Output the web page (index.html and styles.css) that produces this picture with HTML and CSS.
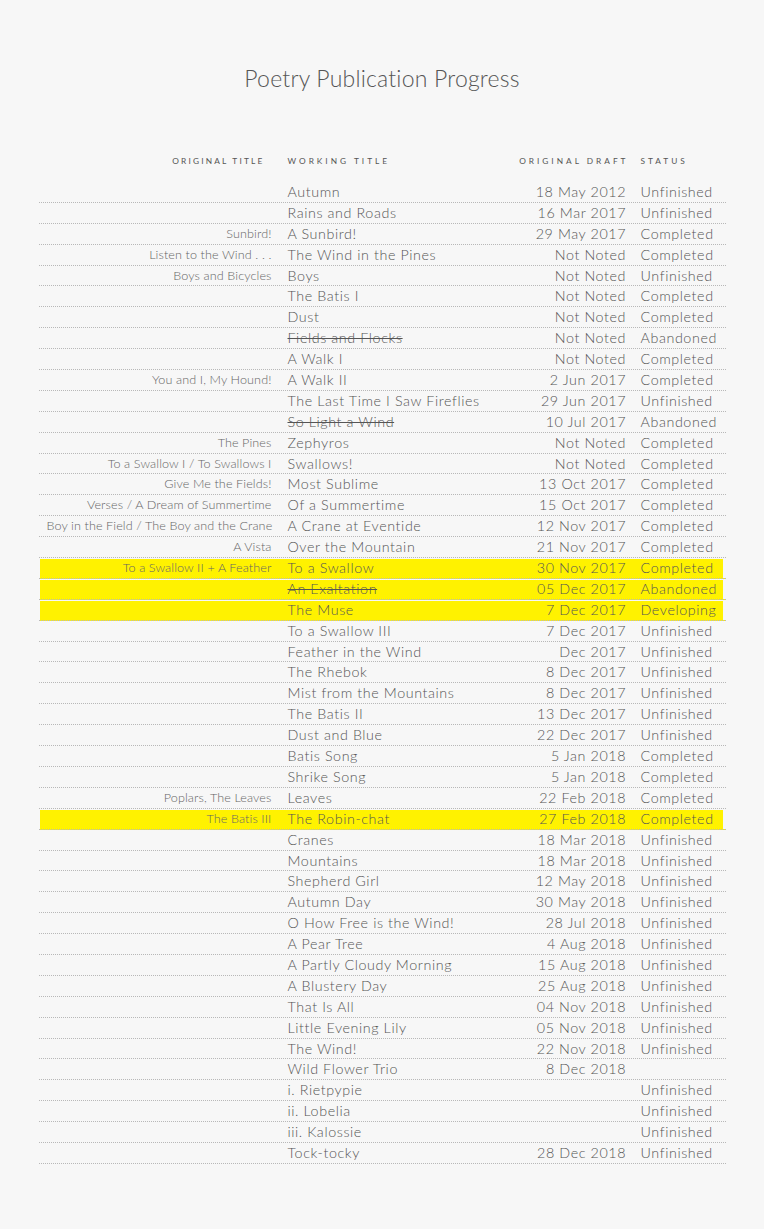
FILE: index.html
```html
<!DOCTYPE html>
<html>
<head>
<meta charset="utf-8">
<title>Poetry Publication Progress</title>
<link rel="stylesheet" href="styles.css">
</head>
<body>
<div class="page">
  <h1 class="title">Poetry Publication Progress</h1>
  <div class="table">
    <div class="row head">
      <div class="c1">Original Title</div>
      <div class="c2">Working Title</div>
      <div class="c3">Original Draft</div>
      <div class="c4">Status</div>
    </div>
    <div class="row"><div class="c1"></div><div class="c2">Autumn</div><div class="c3">18 May 2012</div><div class="c4">Unfinished</div></div>
    <div class="row"><div class="c1"></div><div class="c2">Rains and Roads</div><div class="c3">16 Mar 2017</div><div class="c4">Unfinished</div></div>
    <div class="row"><div class="c1">Sunbird!</div><div class="c2">A Sunbird!</div><div class="c3">29 May 2017</div><div class="c4">Completed</div></div>
    <div class="row"><div class="c1">Listen to the Wind . . .</div><div class="c2">The Wind in the Pines</div><div class="c3">Not Noted</div><div class="c4">Completed</div></div>
    <div class="row"><div class="c1">Boys and Bicycles</div><div class="c2">Boys</div><div class="c3">Not Noted</div><div class="c4">Unfinished</div></div>
    <div class="row"><div class="c1"></div><div class="c2">The Batis I</div><div class="c3">Not Noted</div><div class="c4">Completed</div></div>
    <div class="row"><div class="c1"></div><div class="c2">Dust</div><div class="c3">Not Noted</div><div class="c4">Completed</div></div>
    <div class="row"><div class="c1"></div><div class="c2"><s>Fields and Flocks</s></div><div class="c3">Not Noted</div><div class="c4">Abandoned</div></div>
    <div class="row"><div class="c1"></div><div class="c2">A Walk I</div><div class="c3">Not Noted</div><div class="c4">Completed</div></div>
    <div class="row"><div class="c1">You and I, My Hound!</div><div class="c2">A Walk II</div><div class="c3">2 Jun 2017</div><div class="c4">Completed</div></div>
    <div class="row"><div class="c1"></div><div class="c2">The Last Time I Saw Fireflies</div><div class="c3">29 Jun 2017</div><div class="c4">Unfinished</div></div>
    <div class="row"><div class="c1"></div><div class="c2"><s>So Light a Wind</s></div><div class="c3">10 Jul 2017</div><div class="c4">Abandoned</div></div>
    <div class="row"><div class="c1">The Pines</div><div class="c2">Zephyros</div><div class="c3">Not Noted</div><div class="c4">Completed</div></div>
    <div class="row"><div class="c1">To a Swallow I / To Swallows I</div><div class="c2">Swallows!</div><div class="c3">Not Noted</div><div class="c4">Completed</div></div>
    <div class="row"><div class="c1">Give Me the Fields!</div><div class="c2">Most Sublime</div><div class="c3">13 Oct 2017</div><div class="c4">Completed</div></div>
    <div class="row"><div class="c1">Verses / A Dream of Summertime</div><div class="c2">Of a Summertime</div><div class="c3">15 Oct 2017</div><div class="c4">Completed</div></div>
    <div class="row"><div class="c1">Boy in the Field / The Boy and the Crane</div><div class="c2">A Crane at Eventide</div><div class="c3">12 Nov 2017</div><div class="c4">Completed</div></div>
    <div class="row"><div class="c1">A Vista</div><div class="c2">Over the Mountain</div><div class="c3">21 Nov 2017</div><div class="c4">Completed</div></div>
    <div class="row hl"><div class="c1">To a Swallow II + A Feather</div><div class="c2">To a Swallow</div><div class="c3">30 Nov 2017</div><div class="c4">Completed</div></div>
    <div class="row hl"><div class="c1"></div><div class="c2"><s>An Exaltation</s></div><div class="c3">05 Dec 2017</div><div class="c4">Abandoned</div></div>
    <div class="row hl"><div class="c1"></div><div class="c2">The Muse</div><div class="c3">7 Dec 2017</div><div class="c4">Developing</div></div>
    <div class="row"><div class="c1"></div><div class="c2">To a Swallow III</div><div class="c3">7 Dec 2017</div><div class="c4">Unfinished</div></div>
    <div class="row"><div class="c1"></div><div class="c2">Feather in the Wind</div><div class="c3">Dec 2017</div><div class="c4">Unfinished</div></div>
    <div class="row"><div class="c1"></div><div class="c2">The Rhebok</div><div class="c3">8 Dec 2017</div><div class="c4">Unfinished</div></div>
    <div class="row"><div class="c1"></div><div class="c2">Mist from the Mountains</div><div class="c3">8 Dec 2017</div><div class="c4">Unfinished</div></div>
    <div class="row"><div class="c1"></div><div class="c2">The Batis II</div><div class="c3">13 Dec 2017</div><div class="c4">Unfinished</div></div>
    <div class="row"><div class="c1"></div><div class="c2">Dust and Blue</div><div class="c3">22 Dec 2017</div><div class="c4">Unfinished</div></div>
    <div class="row"><div class="c1"></div><div class="c2">Batis Song</div><div class="c3">5 Jan 2018</div><div class="c4">Completed</div></div>
    <div class="row"><div class="c1"></div><div class="c2">Shrike Song</div><div class="c3">5 Jan 2018</div><div class="c4">Completed</div></div>
    <div class="row"><div class="c1">Poplars, The Leaves</div><div class="c2">Leaves</div><div class="c3">22 Feb 2018</div><div class="c4">Completed</div></div>
    <div class="row hl"><div class="c1">The Batis III</div><div class="c2">The Robin-chat</div><div class="c3">27 Feb 2018</div><div class="c4">Completed</div></div>
    <div class="row"><div class="c1"></div><div class="c2">Cranes</div><div class="c3">18 Mar 2018</div><div class="c4">Unfinished</div></div>
    <div class="row"><div class="c1"></div><div class="c2">Mountains</div><div class="c3">18 Mar 2018</div><div class="c4">Unfinished</div></div>
    <div class="row"><div class="c1"></div><div class="c2">Shepherd Girl</div><div class="c3">12 May 2018</div><div class="c4">Unfinished</div></div>
    <div class="row"><div class="c1"></div><div class="c2">Autumn Day</div><div class="c3">30 May 2018</div><div class="c4">Unfinished</div></div>
    <div class="row"><div class="c1"></div><div class="c2">O How Free is the Wind!</div><div class="c3">28 Jul 2018</div><div class="c4">Unfinished</div></div>
    <div class="row"><div class="c1"></div><div class="c2">A Pear Tree</div><div class="c3">4 Aug 2018</div><div class="c4">Unfinished</div></div>
    <div class="row"><div class="c1"></div><div class="c2">A Partly Cloudy Morning</div><div class="c3">15 Aug 2018</div><div class="c4">Unfinished</div></div>
    <div class="row"><div class="c1"></div><div class="c2">A Blustery Day</div><div class="c3">25 Aug 2018</div><div class="c4">Unfinished</div></div>
    <div class="row"><div class="c1"></div><div class="c2">That Is All</div><div class="c3">04 Nov 2018</div><div class="c4">Unfinished</div></div>
    <div class="row"><div class="c1"></div><div class="c2">Little Evening Lily</div><div class="c3">05 Nov 2018</div><div class="c4">Unfinished</div></div>
    <div class="row"><div class="c1"></div><div class="c2">The Wind!</div><div class="c3">22 Nov 2018</div><div class="c4">Unfinished</div></div>
    <div class="row"><div class="c1"></div><div class="c2">Wild Flower Trio</div><div class="c3">8 Dec 2018</div><div class="c4"></div></div>
    <div class="row"><div class="c1"></div><div class="c2">i. Rietpypie</div><div class="c3"></div><div class="c4">Unfinished</div></div>
    <div class="row"><div class="c1"></div><div class="c2">ii. Lobelia</div><div class="c3"></div><div class="c4">Unfinished</div></div>
    <div class="row"><div class="c1"></div><div class="c2">iii. Kalossie</div><div class="c3"></div><div class="c4">Unfinished</div></div>
    <div class="row"><div class="c1"></div><div class="c2">Tock-tocky</div><div class="c3">28 Dec 2018</div><div class="c4">Unfinished</div></div>
  </div>
</div>
</body>
</html>
```

FILE: styles.css
```css
html, body {
  margin: 0;
  padding: 0;
  background: #f7f7f7;
}

body {
  font-family: Lato, "Open Sans", sans-serif;
  font-weight: 300;
  color: #555;
}

.page {
  padding-top: 63px;
}

.title {
  margin: 0 0 57px;
  text-align: center;
  font-size: 23px;
  font-weight: 300;
  line-height: 30px;
  color: #555;
  letter-spacing: 0.2px;
}

.table {
  width: 687px;
  margin: 0 auto;
}

.row {
  display: grid;
  grid-template-columns: 241px 230px 124px 92px;
  height: 20.9px;
  align-items: center;
  border-bottom: 1px dotted #b8b8b8;
  box-sizing: border-box;
  font-size: 14.3px;
  letter-spacing: 0.6px;
  line-height: 20px;
  white-space: nowrap;
}

.row > div {
  padding: 0 8px;
}

.c1 {
  text-align: right;
  font-size: 12.6px;
  letter-spacing: 0.1px;
  color: #666;
}

.c2 {
  text-align: left;
}

.c3 {
  text-align: right;
  margin-right: -0.6px;
}

.c4 {
  text-align: left;
  padding-left: 7px !important;
}

.row.head {
  border-bottom: none;
  height: 22px;
  margin-bottom: 10px;
  font-size: 8.3px;
  font-weight: 400;
  letter-spacing: 3px;
  text-transform: uppercase;
  color: #555;
}

.row.head .c1 {
  font-size: 8.3px;
  letter-spacing: 2.2px;
  padding-right: 15px;
  color: #555;
}

.row.head .c3 {
  margin-right: 0;
  padding-right: 5px;
}

.row.hl {
  background: #fff200;
  box-shadow: inset 1px 1px 0 #f7f7f7, inset -3px 0 0 #f7f7f7;
}

s {
  text-decoration-thickness: 1px;
}
```
